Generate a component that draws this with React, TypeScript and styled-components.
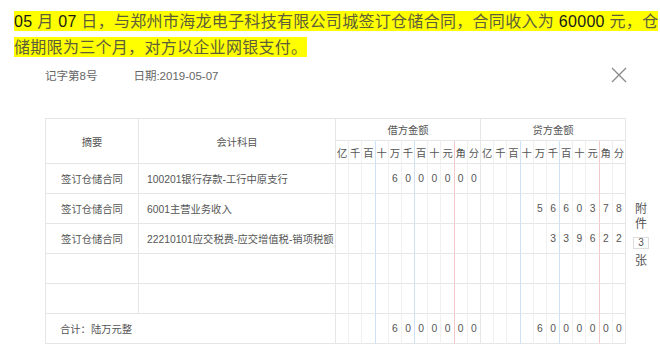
import React from 'react';
import styled, {createGlobalStyle} from 'styled-components';

const GlobalStyle = createGlobalStyle`
  body {
    margin: 0;
    background: #fff;
    font-family: "Liberation Sans", "Noto Sans CJK SC", sans-serif;
  }
`;

type Row = {
  summary: string,
  subject: string,
  debit: string,
  credit: string,
};

const rows: Row[] = [
  {summary: '签订仓储合同', subject: '100201银行存款-工行中原支行', debit: '6000000', credit: ''},
  {summary: '签订仓储合同', subject: '6001主营业务收入', debit: '', credit: '5660378'},
  {summary: '签订仓储合同', subject: '22210101应交税费-应交增值税-销项税额', debit: '', credit: '339622'},
  {summary: '', subject: '', debit: '', credit: ''},
  {summary: '', subject: '', debit: '', credit: ''},
];

const units = ['亿', '千', '百', '十', '万', '千', '百', '十', '元', '角', '分'];

const BORDER = '#e6e6e6';

const lineColor = (i: number) => {
  if (i === 2 || i === 5) return '#cfe1f2';
  if (i === 8) return '#f2c8c8';
  if (i === 10) return BORDER;
  return '#f0f0f0';
};

// right-align an amount into the 11 unit slots
const toSlots = (amount: string) => {
  const chars = amount.split('');
  return [...Array(11 - chars.length).fill(''), ...chars];
};

const Note = styled.div`
  padding: 8px 0 0 14px;
  font-size: 16px;
  line-height: 26px;
  letter-spacing: 0.3px;
  color: #5e5e3a;
  height: 52px;
`;

const Mark = styled.span`
  background: #ffff00;
  padding: 1.5px 0;
`;

const Num = styled.span`
  color: #1a1a1a;
`;

const Panel = styled.div`
  padding-left: 45px;
  width: 606px;
`;

const Header = styled.div`
  display: flex;
  align-items: center;
  height: 30px;
  padding-right: 24px;
  font-size: 11.5px;
  color: #666;
`;

const HeaderText = styled.span<{ $gap?: number }>`
  margin-left: ${p => p.$gap ?? 0}px;
`;

const Close = styled.svg`
  margin-left: auto;
  width: 16px;
  height: 16px;
`;

const Body = styled.div`
  display: flex;
  align-items: center;
  margin-top: 28px;
  gap: 5px;
`;

const Grid = styled.div`
  display: grid;
  box-sizing: border-box;
  width: 582px;
  grid-template-columns: 93px 197px repeat(22, 1fr);
  grid-template-rows: 22px 23px repeat(6, 30px);
  border-top: 1px solid ${BORDER};
  border-left: 1px solid ${BORDER};
  font-size: 10.3px;
  color: #555;
`;

const Cell = styled.div<{ $line?: string, $align?: 'left' | 'center', $pad?: number }>`
  display: flex;
  align-items: center;
  justify-content: ${p => p.$align === 'left' ? 'flex-start' : 'center'};
  padding-left: ${p => p.$pad ?? 0}px;
  border-right: 1px solid ${p => p.$line ?? BORDER};
  border-bottom: 1px solid ${BORDER};
  white-space: nowrap;
`;

const HeadCell = styled(Cell)<{ $span: number }>`
  grid-row: 1 / span ${p => p.$span};
`;

const GroupCell = styled(Cell)<{ $col: number }>`
  grid-column: ${p => p.$col} / span 11;
`;

const TotalCell = styled(Cell)`
  grid-column: 1 / span 2;
`;

const Attach = styled.div`
  display: flex;
  flex-direction: column;
  align-items: center;
  width: 20px;
  margin-top: 8px;
  font-size: 12px;
  line-height: 15px;
  color: #555;
`;

const CountBox = styled.div`
  box-sizing: border-box;
  width: 16px;
  height: 12px;
  margin: 5px 0;
  border: 1px solid #ddd;
  font-size: 10px;
  line-height: 10px;
  text-align: center;
`;

const DigitCells = ({amount}: { amount: string }) => <>
  {toSlots(amount).map((d, i) => <Cell key={i} $line={lineColor(i)}>{d}</Cell>)}
</>;

export default function App() {
  return <>
    <GlobalStyle />
    <Note>
      <Mark><Num>05</Num> 月 <Num>07</Num> 日，与郑州市海龙电子科技有限公司城签订仓储合同，合同收入为 <Num>60000</Num> 元，仓</Mark>
      <br />
      <Mark>储期限为三个月，对方以企业网银支付。</Mark>
    </Note>
    <Panel>
      <Header>
        <HeaderText>记字第8号</HeaderText>
        <HeaderText $gap={36}>日期:2019-05-07</HeaderText>
        <Close viewBox="0 0 16 16">
          <path d="M1 1 L15 15 M15 1 L1 15" stroke="#888" strokeWidth="1.3" fill="none" />
        </Close>
      </Header>
      <Body>
        <Grid>
          <HeadCell $span={2}>摘要</HeadCell>
          <HeadCell $span={2}>会计科目</HeadCell>
          <GroupCell $col={3}>借方金额</GroupCell>
          <GroupCell $col={14}>贷方金额</GroupCell>
          {[0, 1].flatMap(g => units.map((u, i) =>
            <Cell key={`${g}-${i}`} $line={lineColor(i)}>{u}</Cell>))}
          {rows.map((r, idx) => <React.Fragment key={idx}>
            <Cell>{r.summary}</Cell>
            <Cell $align="left" $pad={8}>{r.subject}</Cell>
            <DigitCells amount={r.debit} />
            <DigitCells amount={r.credit} />
          </React.Fragment>)}
          <TotalCell $align="left" $pad={14}>合计：陆万元整</TotalCell>
          <DigitCells amount="6000000" />
          <DigitCells amount="6000000" />
        </Grid>
        <Attach>
          <span>附<br />件</span>
          <CountBox>3</CountBox>
          <span>张</span>
        </Attach>
      </Body>
    </Panel>
  </>;
}
